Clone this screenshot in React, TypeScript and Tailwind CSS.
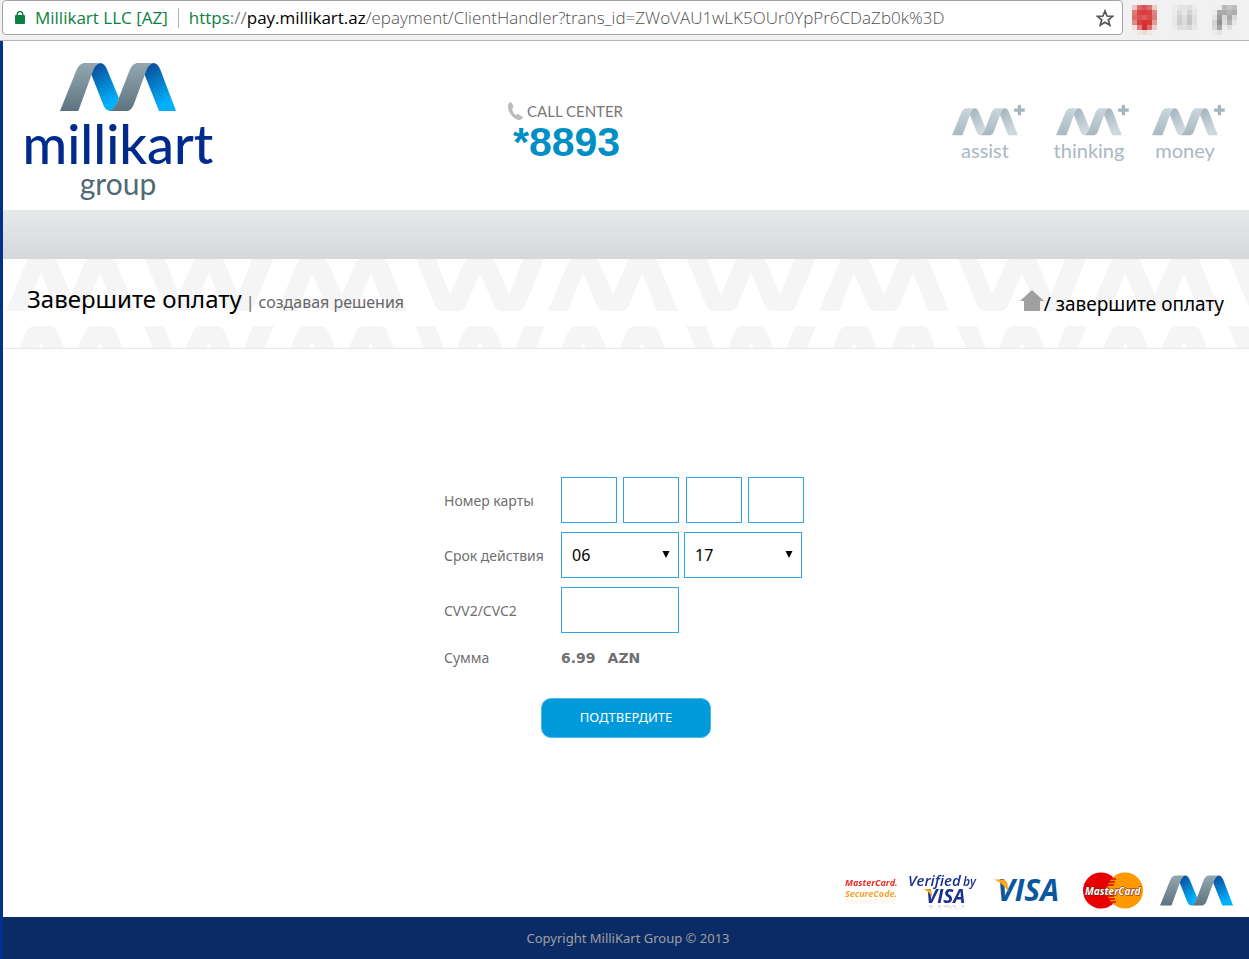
import { useId } from "react";
import type { ReactNode } from "react";

type Tone = { greyTop: string; greyEnd: string; foldTop: string; foldEnd: string };

const brandTone: Tone = { greyTop: "#94a7b0", greyEnd: "#5d7480", foldTop: "#0a4f9c", foldEnd: "#00b0fa" };
const paleTone: Tone = { greyTop: "#cbd6dc", greyEnd: "#a9b8c1", foldTop: "#a5b5be", foldEnd: "#ced9de" };

function Ribbon({ tone, className, plus = false }: { tone: Tone; className: string; plus?: boolean }) {
  const id = useId();
  return (
    <svg className={className} viewBox={plus ? "0 -22 392 170" : "0 0 349 144"} aria-hidden="true">
      <defs>
        <linearGradient id={id + "g"} x1="0" y1="0" x2="0" y2="1">
          <stop offset="0" stopColor={tone.greyTop} />
          <stop offset="1" stopColor={tone.greyEnd} />
        </linearGradient>
        <linearGradient id={id + "f"} x1="0" y1="0" x2="0.4" y2="1">
          <stop offset="0.1" stopColor={tone.foldTop} />
          <stop offset="0.95" stopColor={tone.foldEnd} />
        </linearGradient>
      </defs>
      <path
        fill={`url(#${id}f)`}
        d="M94 34Q104 1 121 0Q134 1 142 20L177 105Q166 140 150 144Q140 144 132 130Z"
      />
      <path fill={`url(#${id}f)`} d="M254 34Q264 1 281 0Q294 1 302 20L349 144H298Z" />
      <path fill={`url(#${id}g)`} d="M0 144L50 20Q58 2 72 0H121Q104 4 95 35L55 144Z" />
      <path
        fill={`url(#${id}g)`}
        d="M150 144Q166 138 177 105L210 20Q218 2 232 0H281Q264 4 255 35L222 125Q215 142 204 144Z"
      />
      {plus && <path fill={tone.foldTop} d="M349 -17h17v19h20v17h-20v19h-17v-19h-20v-17h20z" />}
    </svg>
  );
}

function PatternBackdrop() {
  const m =
    "M0 54L20 6Q23 0 28 0H43Q48 0 51 5L65 38L79 5Q82 0 87 0H103Q108 0 110 5L130 54H109L94 16L81 48Q78 54 73 54H57Q52 54 49 49L35 16L20 54Z";
  return (
    <svg className="absolute inset-0 h-full w-full" aria-hidden="true">
      <defs>
        <pattern id="letters" x="3" y="-2" width="271" height="69" patternUnits="userSpaceOnUse">
          <path d={m} fill="#f5f5f5" />
          <path d={m} fill="#f5f5f5" transform="translate(138 54) scale(1 -1)" />
        </pattern>
      </defs>
      <rect width="100%" height="100%" fill="url(#letters)" />
    </svg>
  );
}

const extensions = [
  {
    name: "Blocker",
    rows: [
      ["#efc3c3", "#d96a6a", "#d65555", "#d97070", "#efc8c8"],
      ["#dd7b7b", "#d64444", "#d83c3c", "#d64444", "#dd8585"],
      ["#d86c6c", "#d95050", "#dc5c5c", "#d84a4a", "#dd7c7c"],
      ["#e08888", "#d84040", "#d63030", "#d63838", "#e29c9c"],
      ["#f0dede", "#de7d7d", "#d62f2f", "#de6c6c", "#eecaca"],
      ["#f0f0f0", "#f0e6e6", "#eed8d8", "#f0e6e6", "#f0f0f0"],
    ],
  },
  {
    name: "Reader",
    rows: [
      ["#ededed", "#e4e4e4", "#e4e4e4", "#dedede", "#ebebeb"],
      ["#ebebeb", "#dadada", "#e6e6e6", "#d4d4d4", "#e4e4e4"],
      ["#eaeaea", "#cfcfcf", "#dedede", "#c6c6c6", "#e0e0e0"],
      ["#eaeaea", "#cdcdcd", "#dcdcdc", "#c4c4c4", "#e0e0e0"],
      ["#ececec", "#dddddd", "#dfdfdf", "#d9d9d9", "#e6e6e6"],
      ["#f0f0f0", "#f0f0f0", "#f0f0f0", "#f0f0f0", "#f0f0f0"],
    ],
  },
  {
    name: "Metrics",
    rows: [
      ["#f0f0f0", "#ececec", "#b9b9b9", "#c4c4c4", "#bcbcbc"],
      ["#ededed", "#a8a8a8", "#aaaaaa", "#b4b4b4", "#adadad"],
      ["#e2e2e2", "#9c9c9c", "#d8d8d8", "#a9a9a9", "#dadada"],
      ["#d4d4d4", "#8f8f8f", "#dedede", "#b5b5b5", "#e6e6e6"],
      ["#d9d9d9", "#a6a6a6", "#ececec", "#dedede", "#f0f0f0"],
      ["#ececec", "#e4e4e4", "#f0f0f0", "#f0f0f0", "#f0f0f0"],
    ],
  },
];

function BrowserBar() {
  return (
    <div className="flex h-[41px] items-start border-b border-[#b4b4b4] bg-[#f1f1f1] pl-0.5 pr-3">
      <div className="flex h-[35px] min-w-0 flex-1 items-center rounded-sm border border-[#a5a5a5] bg-white pl-3 pr-2 font-['Open_Sans',sans-serif] text-[17px] leading-6">
        <svg className="h-[13px] w-[10px] shrink-0" viewBox="0 0 10 13" aria-hidden="true">
          <rect y="4" width="10" height="9" rx="1" fill="#0b8043" />
          <path d="M2.2 5V3.4a2.8 2.8 0 0 1 5.6 0V5" fill="none" stroke="#0b8043" strokeWidth="1.4" />
        </svg>
        <span className="ml-2.5 whitespace-nowrap text-[#0b8043]">Millikart LLC [AZ]</span>
        <span className="ml-2.5 h-5 w-px shrink-0 bg-[#b0b0b0]" />
        <span className="ml-2.5 min-w-0 flex-1 overflow-hidden whitespace-nowrap text-[#808080]">
          <span className="text-[#0b8043]">https</span>://<span className="text-black">pay.millikart.az</span>
          <span className="font-light text-[#505050]">
            /epayment/ClientHandler?trans_id=ZWoVAU1wLK5OUr0YpPr6CDaZb0k%3D
          </span>
        </span>
        <button type="button" aria-label="Bookmark this page">
          <svg className="h-[18px] w-[18px]" viewBox="0 0 18 18" fill="none" stroke="#555" strokeWidth="1.7">
            <path d="M9 2L11 7L16.6 7.3L12.3 10.8L13.8 16.2L9 13.2L4.2 16.2L5.7 10.8L1.4 7.3L7 7Z" />
          </svg>
        </button>
      </div>
      <div className="flex gap-[15px] pl-[9px] pt-[5px]">
        {extensions.map((ext) => (
          <button key={ext.name} type="button" aria-label={ext.name}>
            <svg className="h-[30px] w-[25px]" viewBox="0 0 5 6" shapeRendering="crispEdges">
              {ext.rows.map((row, y) =>
                row.map((color, x) => <rect key={`${x}-${y}`} x={x} y={y} width="1" height="1" fill={color} />),
              )}
            </svg>
          </button>
        ))}
      </div>
    </div>
  );
}

function SubBrand({ name }: { name: string }) {
  return (
    <a
      href="#"
      className="flex w-[74px] flex-col items-center font-['Lato',sans-serif] text-[20px] leading-7 text-[#a9b8c1]"
    >
      <Ribbon tone={paleTone} plus className="h-8 w-[74px]" />
      <span className="pr-2">{name}</span>
    </a>
  );
}

function SiteHeader() {
  return (
    <header>
      <div className="flex h-[169px] items-start justify-between bg-white pl-5 pr-[23px] pt-[22px]">
        <a href="#" className="flex w-[190px] flex-col items-center font-['Lato',sans-serif]">
          <Ribbon tone={brandTone} className="h-12 w-[116px]" />
          <span className="text-[54px] font-medium leading-[66px] text-[#002a8c]">millikart</span>
          <span className="-mt-3 text-[30px] leading-9 text-[#4f6a75]">group</span>
        </a>
        <div className="w-[151px] pt-9 font-['Lato',sans-serif]">
          <div className="flex items-center gap-0.5 text-[15px] leading-6 text-[#777]">
            <svg className="h-5 w-[18px] shrink-0" viewBox="0 0 18 20" aria-hidden="true">
              <path
                fill="#bcbcbc"
                d="M4 1L6.500 5.500Q6.800 6.500 5.200 7.400Q5.300 11.500 9 14Q10.500 12.700 11.400 13.200L16 16Q16.500 17 13.500 18.800Q10 20 5.500 15.500Q0 9.500 1.200 4Q2 1.200 4 1Z"
              />
            </svg>
            <span className="whitespace-nowrap">CALL CENTER</span>
          </div>
          <div className="pl-1.5 font-['Liberation_Sans',sans-serif] text-[41px] font-bold leading-[38px] text-[#008fc5]">
            *8893
          </div>
        </div>
        <nav aria-label="Brands" className="flex gap-[22px] pt-[41px]">
          <div className="pr-2">
            <SubBrand name="assist" />
          </div>
          <SubBrand name="thinking" />
          <SubBrand name="money" />
        </nav>
      </div>
      <div className="h-[49px] bg-linear-to-b from-[#e6eaeb] to-[#d5d8d9]" />
      <div className="relative h-[90px] border-b border-[#e8e8e8] bg-white">
        <PatternBackdrop />
        <div className="relative flex items-start justify-between pl-6 pr-[25px]">
          <div className="flex items-baseline gap-1 whitespace-nowrap pt-[22px] text-[16px] text-[#666]">
            <h1 className="text-[24px] leading-9 text-black">Завершите оплату</h1>
            <span>|</span>
            <span>создавая решения</span>
          </div>
          <nav
            aria-label="Breadcrumb"
            className="flex items-baseline whitespace-nowrap pt-[31px] text-[19px] leading-7 text-black"
          >
            <a href="#" aria-label="Home">
              <svg className="h-[21px] w-6" viewBox="0 0 24 21">
                <path d="M12 0L24 11H20V21H4V11H0Z" fill="#a0a0a0" />
              </svg>
            </a>
            <span>/ завершите оплату</span>
          </nav>
        </div>
      </div>
    </header>
  );
}

function DateSelect({ label, value, options }: { label: string; value: string; options: string[] }) {
  return (
    <div className="relative flex-1">
      <select
        aria-label={label}
        defaultValue={value}
        className="h-[46px] w-full appearance-none border border-[#2fa4e0] bg-white px-2.5 text-[16px] text-black"
      >
        {options.map((o) => (
          <option key={o}>{o}</option>
        ))}
      </select>
      <svg
        className="pointer-events-none absolute right-[9px] top-[19px] h-[7px] w-2"
        viewBox="0 0 8 7"
        aria-hidden="true"
      >
        <path d="M0.500 0H7.500L4 7Z" fill="#000" />
      </svg>
    </div>
  );
}

function Row({ label, htmlFor, children }: { label: string; htmlFor?: string; children: ReactNode }) {
  return (
    <div className="flex items-center">
      <label htmlFor={htmlFor} className="w-[117px] shrink-0 whitespace-nowrap">
        {label}
      </label>
      {children}
    </div>
  );
}

const months = Array.from({ length: 12 }, (_, i) => String(i + 1).padStart(2, "0"));
const years = Array.from({ length: 10 }, (_, i) => String(17 + i));

function PaymentForm() {
  return (
    <form
      className="mx-auto flex w-[364px] flex-col gap-[9px] pt-32 text-[14px] text-[#707070]"
      onSubmit={(e) => e.preventDefault()}
    >
      <Row label="Номер карты" htmlFor="card-1">
        <div className="flex w-[243px] justify-between">
          {[1, 2, 3, 4].map((n) => (
            <input
              key={n}
              id={`card-${n}`}
              aria-label={`Номер карты ${n}`}
              maxLength={4}
              className="h-[46px] w-14 border border-[#2fa4e0] bg-white px-2 text-[16px] text-black"
            />
          ))}
        </div>
      </Row>
      <Row label="Срок действия">
        <div className="flex w-[241px] gap-[5px]">
          <DateSelect label="Месяц" value="06" options={months} />
          <DateSelect label="Год" value="17" options={years} />
        </div>
      </Row>
      <Row label="CVV2/CVC2" htmlFor="cvv">
        <input
          id="cvv"
          maxLength={3}
          className="h-[46px] w-[118px] border border-[#2fa4e0] bg-white px-2 text-[16px] text-black"
        />
      </Row>
      <div className="flex items-center pt-1.5 leading-5">
        <span className="w-[117px]">Сумма</span>
        <span className="flex gap-3 font-['DejaVu_Sans',sans-serif] font-bold">
          <span>6.99</span>
          <span>AZN</span>
        </span>
      </div>
      <button
        type="submit"
        className="mt-[21px] h-10 w-[170px] self-center rounded-[10px] border border-[#4db9e6] bg-[#009ada] text-[13px] text-white"
      >
        ПОДТВЕРДИТЕ
      </button>
    </form>
  );
}

function PaymentBrands() {
  return (
    <div className="flex items-start justify-end pr-4 font-['Open_Sans',sans-serif]">
      <svg
        className="mt-[3px] h-6 w-[56px] overflow-visible [-webkit-box-reflect:below_-2px_linear-gradient(transparent_50%,rgb(0_0_0/0.2))]"
        viewBox="0 0 56 24"
        role="img"
        aria-label="MasterCard SecureCode"
      >
        <g fontFamily="Open Sans" fontStyle="italic" fontWeight="700" fontSize="9">
          <text x="0" y="11" fill="#ee2a24">MasterCard.</text>
          <text x="0" y="22" fill="#f9a02c">SecureCode.</text>
        </g>
      </svg>
      <svg
        className="ml-1.5 h-8 w-[72px] overflow-visible [-webkit-box-reflect:below_0px_linear-gradient(transparent_80%,rgb(0_0_0/0.2))]"
        viewBox="0 0 72 32"
        role="img"
        aria-label="Verified by VISA"
      >
        <g fontFamily="Open Sans" fontStyle="italic" fill="#1a2f92">
          <text x="1" y="14" fontSize="15" fontWeight="600">Verified</text>
          <text x="56" y="14" fontSize="12" fontWeight="600">by</text>
          <text x="19" y="31" fontSize="19" fontWeight="700">VISA</text>
        </g>
        <path d="M16 17H21Q24 17 24.500 20L25.500 26Q22 19 16 17Z" fill="#f7a823" />
      </svg>
      <svg className="ml-[15px] mt-1.5 h-6 w-[66px] overflow-visible" viewBox="0 0 66 24" role="img" aria-label="VISA">
        <text x="3" y="23" fontFamily="Open Sans" fontStyle="italic" fontWeight="700" fontSize="30" fill="#0a57a0">
          VISA
        </text>
        <path d="M0 1.500H9Q13 2 13.500 6L14.500 14Q9 5 0 1.500Z" fill="#f7a823" />
      </svg>
      <svg className="ml-[23px] h-[37px] w-[60px]" viewBox="0 0 60 37" role="img" aria-label="MasterCard">
        <circle cx="18" cy="18.500" r="18" fill="#e60000" />
        <circle cx="42" cy="18.500" r="18" fill="#ff9900" />
        <path d="M27 7h6M25 10h7M24 13h7M24 24h7M25 27h7M27 30h6" stroke="#e60000" strokeWidth="1.500" />
        <g fontFamily="Open Sans" fontStyle="italic" fontWeight="700" fontSize="10">
          <text x="2" y="22.500" fill="#fff" stroke="#6b1a10" strokeWidth="1" paintOrder="stroke">MasterCard</text>
        </g>
      </svg>
      <Ribbon tone={brandTone} className="ml-[17px] mt-[3px] h-[31px] w-[73px]" />
    </div>
  );
}

export default function App() {
  return (
    <div className="flex min-h-screen flex-col bg-white font-['Noto_Sans',sans-serif]">
      <BrowserBar />
      <div className="flex flex-1 flex-col border-l-3 border-[#003090]">
        <SiteHeader />
        <main className="flex-1">
          <PaymentForm />
        </main>
        <footer>
          <PaymentBrands />
          <div className="mt-2 flex h-[42px] items-center justify-center bg-[#0b2b66] pl-1 pt-0.5 text-[13px] text-[#a0a0a0]">
            Copyright MilliKart Group © 2013
          </div>
        </footer>
      </div>
    </div>
  );
}
